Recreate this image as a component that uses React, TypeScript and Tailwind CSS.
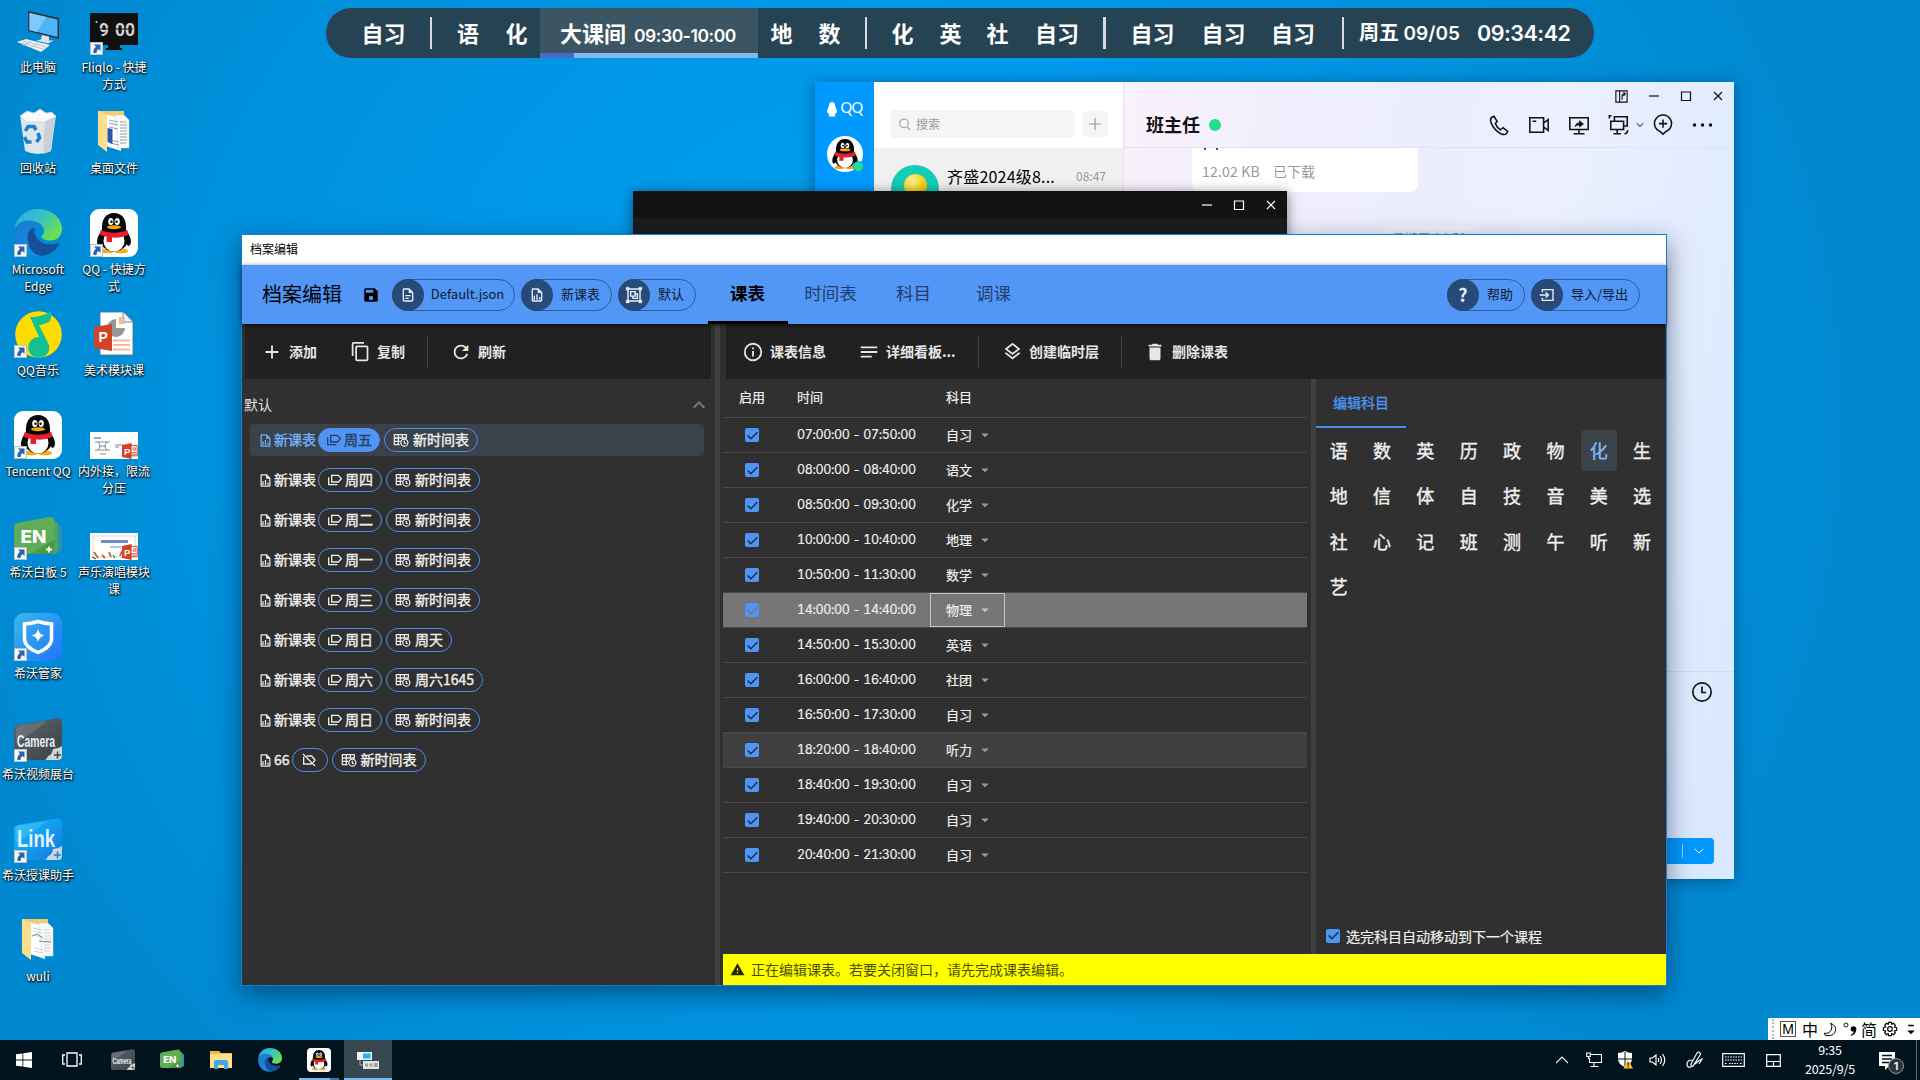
import React from "react";
import type { ReactNode } from "react";

const PATHS = {
  save: "M15,9H5V5H15M12,19A3,3 0 0,1 9,16A3,3 0 0,1 12,13A3,3 0 0,1 15,16A3,3 0 0,1 12,19M17,3H5C3.89,3 3,3.9 3,5V19A2,2 0 0,0 5,21H19A2,2 0 0,0 21,19V7L17,3Z",
  fileDoc: "M6,2A2,2 0 0,0 4,4V20A2,2 0 0,0 6,22H18A2,2 0 0,0 20,20V8L14,2H6M6,4H13V9H18V20H6V4M8,12V14H16V12H8M8,16V18H13V16H8Z",
  fileChart: "M6 2C4.9 2 4 2.9 4 4V20C4 21.1 4.9 22 6 22H18C19.1 22 20 21.1 20 20V8L14 2H6M6 4H13V9H18V20H6V4M9 13V19H7V13H9M15 15V19H17V15H15M11 11V19H13V11H11Z",
  plus: "M19,13H13V19H11V13H5V11H11V5H13V11H19V13Z",
  copy: "M19,21H8V7H19M19,5H8A2,2 0 0,0 6,7V21A2,2 0 0,0 8,23H19A2,2 0 0,0 21,21V7A2,2 0 0,0 19,5M16,1H4A2,2 0 0,0 2,3V17H4V3H16V1Z",
  refresh: "M17.65,6.35C16.2,4.9 14.21,4 12,4A8,8 0 0,0 4,12A8,8 0 0,0 12,20C15.73,20 18.84,17.45 19.73,14H17.65C16.83,16.33 14.61,18 12,18A6,6 0 0,1 6,12A6,6 0 0,1 12,6C13.66,6 15.14,6.69 16.22,7.78L13,11H20V4L17.65,6.35Z",
  info: "M11,9H13V7H11M12,20C7.59,20 4,16.41 4,12C4,7.59 7.59,4 12,4C16.41,4 20,7.59 20,12C20,16.41 16.41,20 12,20M12,2A10,10 0 0,0 2,12A10,10 0 0,0 12,22A10,10 0 0,0 22,12A10,10 0 0,0 12,2M11,17H13V11H11V17Z",
  text: "M3,6H21V8H3V6M3,11H21V13H3V11M3,16H15V18H3V16Z",
  layers: "M12,18.54L19.37,12.8L21,14.07L12,21.07L3,14.07L4.62,12.81L12,18.54M12,16L3,9L12,2L21,9L12,16M12,4.53L6.26,9L12,13.47L17.74,9L12,4.53Z",
  trash: "M19,4H15.5L14.5,3H9.5L8.5,4H5V6H19M6,19A2,2 0 0,0 8,21H16A2,2 0 0,0 18,19V7H6V19Z",
  chevronUp: "M7.41,15.41L12,10.83L16.59,15.41L18,14L12,8L6,14L7.41,15.41Z",
  menuDown: "M7,10L12,15L17,10H7Z",
  alert: "M13,14H11V10H13M13,18H11V16H13M1,21H23L12,2L1,21Z",
};

function Mdi({ d, className }: { d: string; className: string }) {
  return (
    <svg viewBox="0 0 24 24" fill="currentColor" className={`shrink-0 ${className}`}>
      <path d={d} />
    </svg>
  );
}

function Line({ children, className, w = 2, box = "0 0 24 24" }: { children: ReactNode; className: string; w?: number; box?: string }) {
  return (
    <svg viewBox={box} fill="none" stroke="currentColor" strokeWidth={w} className={`shrink-0 ${className}`}>
      {children}
    </svg>
  );
}

const Labels = ({ off = false }: { off?: boolean }) =>
  off ? (
    <Line className="size-4"><path d="M3 3l18 18M8.500 6H16l5 6-3 4M4 7v11h12M4 18V7" /></Line>
  ) : (
    <Line className="size-4"><path d="M7 5h10l4.500 5-4.500 5H7zM2.500 8v11h13" /></Line>
  );

const TableClock = () => (
  <Line className="size-4" w={1.900}>
    <path d="M10 19H2V4h18v6M2 9h18M2 14h9M8 4v15M14 4v6" />
    <circle cx="17" cy="16" r="5.300" />
    <path d="M17 13v3.500l2.500 1.200" />
  </Line>
);

const Group = () => (
  <Line className="size-[18px]" w={1.900}>
    <path d="M4 4h16v16H4z" />
    <path d="M1.500 1.500h4v4h-4zM18.500 1.500h4v4h-4zM1.500 18.500h4v4h-4zM18.500 18.500h4v4h-4z" fill="currentColor" strokeWidth="0.500" />
    <path d="M7.500 7.500h6v6h-6zM13.500 10.500h3v6h-6v-3" />
  </Line>
);

const Import = () => (
  <Line className="size-4" w={2}>
    <path d="M5 8V4h16v16H5v-4M1 12h13M10 8l4 4-4 4" />
  </Line>
);

function Penguin({ className }: { className: string }) {
  return (
    <svg viewBox="0 0 48 48" className={className}>
      <ellipse cx="17" cy="42" rx="7" ry="2.300" fill="#f8a90b" />
      <ellipse cx="31" cy="42" rx="7" ry="2.300" fill="#f8a90b" />
      <path d="M12 21C6 29 6 35 9 37c2 0 4-4 4-7zM36 21c6 8 6 14 3 16-2 0-4-4-4-7z" fill="#080808" />
      <ellipse cx="24" cy="30" rx="14" ry="12.500" fill="#080808" />
      <ellipse cx="24" cy="32" rx="10.500" ry="10.500" fill="#fff" />
      <path d="M12 22C11 10 16 4 24 4s13 6 12 18c-6 4-18 4-24 0z" fill="#080808" />
      <ellipse cx="20.800" cy="12.500" rx="2.600" ry="3.600" fill="#fff" />
      <ellipse cx="27.200" cy="12.500" rx="2.600" ry="3.600" fill="#fff" />
      <circle cx="21.500" cy="12.800" r="1.200" fill="#000" />
      <circle cx="26.500" cy="12.800" r="1.200" fill="#000" />
      <ellipse cx="24" cy="18.200" rx="7" ry="2" fill="#f8a90b" />
      <path d="M10.500 21c8 3.500 19 3.500 27 0l.5 5c-4 2-11 3-16 2.500V33h-5.500v-5.500c-3-.4-6-1.200-6.500-2z" fill="#e71f2a" />
    </svg>
  );
}

function EdgeLogo({ className, id }: { className: string; id: string }) {
  return (
    <svg viewBox="0 0 48 48" className={className}>
      <defs>
        <linearGradient id={id + "a"} x1="0" y1="0" x2="1" y2="0.600">
          <stop offset="0" stopColor="#2ba8e8" />
          <stop offset="0.500" stopColor="#35c1c9" />
          <stop offset="1" stopColor="#6be04f" />
        </linearGradient>
        <linearGradient id={id + "b"} x1="0" y1="0" x2="0.600" y2="1">
          <stop offset="0" stopColor="#1b78cf" />
          <stop offset="1" stopColor="#1290e4" />
        </linearGradient>
      </defs>
      <path d="M0.500 21C2 8 12 0 24 0c14 0 24 9.500 24 20 0 7-5 11.500-11.500 11.500-5 0-9-1.600-9-3.500 0-1.500 2.500-2.500 2.500-6 0-5-6-9-13-9C8 13 2 17 .5 21z" fill={`url(#${id}a)`} />
      <path d="M.2 22C2 14 9 11 16 11.500c7 .5 13 4 14 9-2-2-5-3-8-1.500-4 2-6.500 7-5.500 13 1 7 6 12.500 12 15C12 50-1 38 .2 22z" fill={`url(#${id}b)`} />
      <path d="M13.500 28c0-5 3-9 7.500-9.500-2 6 1.500 12 7 15 6 3 12 2 15.500.8 1.500-.5 2 .5 1 2C40 44 31 48 25 46.500 17 44 13.500 36 13.500 28z" fill="#164f98" />
    </svg>
  );
}

function EnLogo({ className }: { className: string }) {
  return (
    <svg viewBox="0 0 48 44" className={className}>
      <path d="M43 8l3 1.500q2 1 2 3V33q0 2-2 2.500l-3 .5z" fill="#2f93a0" />
      <path d="M38 4l4 1.500q2 1 2 3V35q0 2-2 2.500l-4 .8z" fill="#4aa56a" />
      <path d="M3 7L36 1q4-.5 4 3v30q0 4-4 4H4q-4 0-4-4V11q0-3 3-4z" fill="#5fad56" />
      <path d="M40 24v10q0 4-4 4H16z" fill="#4c984b" />
      <text x="6.500" y="27" fontSize="17.500" fontWeight="800" fontFamily="Inter" fill="#fff" textLength="26" lengthAdjust="spacingAndGlyphs">EN</text>
      <path d="M32 33.500h6M35 30.500v6" stroke="#fff" strokeWidth="1.800" />
    </svg>
  );
}

function CardLogo({ label, className, id, top, bottom, plus, size }: { label: string; className: string; id: string; top: string; bottom: string; plus: string; size: number }) {
  return (
    <svg viewBox="0 0 48 44" className={`overflow-visible ${className}`}>
      <defs>
        <linearGradient id={id} x1="0" y1="0" x2="1" y2="1">
          <stop offset="0" stopColor={top} />
          <stop offset="1" stopColor={bottom} />
        </linearGradient>
      </defs>
      <path d="M4 7L43 .5q5-.5 5 4V38q0 4-4 4H4q-4 0-4-4V12q0-4 4-5z" fill={`url(#${id})`} />
      <path d="M5 7.500L33 3Q20 14 2 25V12q0-4 3-4.500z" fill="#fff" opacity="0.120" />
      <path d="M34 38q4-1 5-7 5 0 9-3v10q0 4-4 4H31q2-1 3-4z" fill="#cdd5da" />
      <text x="3" y="29" fontSize={size} fontWeight="700" fontFamily="Liberation Sans" fill="#e9f1f8" textLength="38" lengthAdjust="spacingAndGlyphs">{label}</text>
      <path d="M40 37h7M43.500 33.500v7" stroke={plus} strokeWidth="1.500" />
    </svg>
  );
}

function Ppt({ className }: { className: string }) {
  return (
    <svg viewBox="0 0 20 20" className={className}>
      <path d="M9 3h10v13H9" fill="#fff" stroke="#d04423" strokeWidth="1.200" />
      <path d="M14 6h3v3h-3zM12 12h6M12 14h6" stroke="#d04423" fill="none" />
      <path d="M0 2.500L12 0v20L0 17.500z" fill="#d04423" />
      <text x="2.500" y="14.500" fontSize="12" fontWeight="700" fontFamily="Liberation Sans" fill="#fff">P</text>
    </svg>
  );
}

const FolderDocs = ({ pic = false }: { pic?: boolean }) => (
  <svg viewBox="0 0 32 44" className="h-11 w-8">
    <path d="M0 1h26v34H6z" fill="#f2cd6b" />
    <path d="M6 4l17 4v33L8 36z" fill="#fff" />
    <path d="M17 5h9l5 5v28H20z" fill="#fbfbfb" stroke="#cfd4d8" strokeWidth="0.500" />
    <path d="M11 10l9 2M11 13l9 2M11 17l9 2M12 30l9 2M12 33l9 2M22 12h6M22 15h7M22 18h7M22 21h7M22 24h7M22 27h7M22 30h7M22 33h6" stroke={pic ? "#c3cad0" : "#8a939b"} strokeWidth="0.900" />
    {pic ? <path d="M10 18l5-2 6 4M17 23l12 1" stroke="#6b9a78" fill="none" /> : <path d="M9.500 18l5 1v15l-5-2z" fill="#2d58a8" />}
    <path d="M0 1l9 4v37L0 35z" fill="#fbdf8d" />
  </svg>
);

const Shortcut = () => (
  <svg viewBox="0 0 13 13" className="absolute bottom-0 left-0 size-[13px]">
    <path d="M0 0h13v13H0z" fill="#b9bfc6" />
    <path d="M1 1h11v11H1z" fill="#f6f8fa" />
    <path d="M4 2.500h6.500V9L8.500 7Q6.500 8 6.500 11H3.500Q2.500 7.500 6 4.800z" fill="#2d62a8" />
  </svg>
);

const ThisPc = () => (
  <svg viewBox="0 0 48 48" className="size-12">
    <path d="M14 4l31 7v21L14 24z" fill="#2b3238" />
    <path d="M15.500 6l28 6.500v17.500l-28-7z" fill="#4db4f7" />
    <path d="M15.500 6l17 4-10 15-7-2z" fill="#7ccbff" />
    <path d="M28 28l7 1.500v4h5l-6 3-12-3 5-1z" fill="#dce1e4" />
    <path d="M3 35l9-3 24 6-9 7z" fill="#f0f2f4" />
    <path d="M6 35.500l23 6.500M9 34l23 6M9 39l8-5M16 41l8-5" stroke="#aeb7be" strokeWidth="0.800" />
  </svg>
);

const Bin = () => (
  <svg viewBox="0 0 48 48" className="size-12">
    <path d="M6 7h36l-5 36q-13 6-26 0z" fill="#dfe6ea" />
    <path d="M6 8l7-5 7 2 6-4 6 4 6-1 4 5-5 5H12z" fill="#f8fafb" stroke="#c3ccd2" strokeWidth="0.700" />
    <path d="M31 13l10-4-4 34-8 3z" fill="#c8d1d7" />
    <path d="M11.500 23l2.500-4.500h6l2 3.500M24 25l1.500 5-3 4M17.500 34h-4.500L10.500 29" fill="none" stroke="#1d7fd1" strokeWidth="3.600" />
  </svg>
);

const Fliqlo = () => (
  <svg viewBox="0 0 48 44" className="h-11 w-12">
    <path d="M0 4h48v32H0zM18 36h12v3h2v2H16v-2h2z" fill="#101010" />
    <text x="9" y="27" fontSize="19" fontWeight="700" fontFamily="Roboto" fill="#d3d3d3" textLength="10" lengthAdjust="spacingAndGlyphs">9</text>
    <text x="25" y="27" fontSize="19" fontWeight="700" fontFamily="Roboto" fill="#d3d3d3" textLength="20" lengthAdjust="spacingAndGlyphs">00</text>
    <path d="M6 20h37" stroke="#101010" strokeWidth="1" />
    <circle cx="6.500" cy="13" r="1" fill="#d3d3d3" />
  </svg>
);

const QQMusic = () => (
  <svg viewBox="0 0 48 48" className="size-12">
    <circle cx="24.500" cy="24.500" r="23.300" fill="#ffdc00" />
    <path d="M16 7q13 0 21-6 1 6-1 10-4 3-11 4l10 20a10.500 10.500 0 1 1-10-8z" fill="#14c192" />
  </svg>
);

const PptDoc = () => (
  <svg viewBox="0 0 40 46" className="h-[46px] w-10">
    <path d="M6 1h23l10 10v33H6z" fill="#fff" stroke="#3f6f9c" strokeWidth="0.800" />
    <path d="M29 1v10h10" fill="#f4f4f4" stroke="#3f6f9c" strokeWidth="0.800" />
    <path d="M22 8v9h9a9 9 0 1 1-9-9z" fill="#969696" />
    <path d="M25 6h6v7h-6z" fill="#f5b99f" />
    <path d="M19 29.500h17M19 34h17M19 38.500h17" stroke="#f5b99f" strokeWidth="2" />
    <path d="M0 16l18-3v27L0 37z" fill="#d04423" />
    <text x="4.500" y="31" fontSize="14" fontWeight="700" fontFamily="Liberation Sans" fill="#fff">P</text>
  </svg>
);

const Slide = ({ kind }: { kind: "circuit" | "music" }) => (
  <div className="relative h-[27px] w-12 self-end bg-white">
    {kind === "circuit" ? (
      <svg viewBox="0 0 48 27" className="h-full w-full">
        <path d="M4 6h7" stroke="#5a9ad8" strokeWidth="1.500" />
        <path d="M5 10h15M5 18h15M8 10q4 4 0 8M17 10q-4 4 0 8M9 14h7M10 22h6M25 13h8M25 15h4" stroke="#85898c" fill="none" />
      </svg>
    ) : (
      <svg viewBox="0 0 48 27" className="h-full w-full">
        <path d="M3 3h42v21H3z" fill="none" stroke="#ddd6cf" />
        <path d="M11 8.500h27" stroke="#6f8cc9" strokeWidth="3" />
        <path d="M20 14h11" stroke="#9db2dc" strokeWidth="1.500" />
        <path d="M4 19l4 6M12 22l3 3M19 19l2 5M30 23l2-5" stroke="#c66a3a" strokeWidth="2" />
        <path d="M2 24l4 2M23 22l2 3" stroke="#333" />
      </svg>
    )}
    <Ppt className="absolute right-0 bottom-0 size-4" />
  </div>
);

const Seewo = () => (
  <svg viewBox="0 0 48 48" className="size-12">
    <defs>
      <linearGradient id="seewo" x1="0" y1="0" x2="1" y2="1">
        <stop offset="0" stopColor="#38b9e6" />
        <stop offset="1" stopColor="#1f74ff" />
      </linearGradient>
    </defs>
    <rect width="48" height="48" rx="10" fill="url(#seewo)" />
    <path d="M10.500 11q7-.5 13.500-2.500Q30.500 10.500 37.500 11v15q0 8-13.500 13.500Q10.500 34 10.500 26z" fill="none" stroke="#fff" strokeWidth="3.500" />
    <path d="M24 16q1 5.500 6.500 6.500-5.500 1-6.500 6.500-1-5.500-6.500-6.500 5.500-1 6.500-6.500z" fill="#fff" />
  </svg>
);

const QQTile = () => (
  <div className="size-12 rounded-[9px] bg-white">
    <Penguin className="size-12" />
  </div>
);

function DesktopIcon({ label, shortcut, children }: { label: string; shortcut?: boolean; children?: ReactNode }) {
  return (
    <div className="flex h-[101px] w-[76px] flex-col items-center">
      <div className="relative flex h-12 w-12 shrink-0 items-center justify-center">
        {children}
        {shortcut && <Shortcut />}
      </div>
      <div className="mt-[2.500px] w-[80px] text-center text-[12px] leading-[17px] whitespace-pre text-white [text-shadow:1px_1px_2px_#000,0_1px_2px_#000]">{label}</div>
    </div>
  );
}

function Desktop() {
  return (
    <div className="absolute top-[7px] left-0 flex">
      <div className="flex flex-col">
        <DesktopIcon label="此电脑"><ThisPc /></DesktopIcon>
        <DesktopIcon label="回收站"><Bin /></DesktopIcon>
        <DesktopIcon label={"Microsoft\nEdge"} shortcut><EdgeLogo id="edge1" className="size-12" /></DesktopIcon>
        <DesktopIcon label="QQ音乐" shortcut><QQMusic /></DesktopIcon>
        <DesktopIcon label="Tencent QQ" shortcut><QQTile /></DesktopIcon>
        <DesktopIcon label="希沃白板 5" shortcut><EnLogo className="mt-1 h-11 w-12" /></DesktopIcon>
        <DesktopIcon label="希沃管家" shortcut><Seewo /></DesktopIcon>
        <DesktopIcon label="希沃视频展台" shortcut><CardLogo id="cam1" label="Camera" size={17} top="#5d666d" bottom="#3a4147" plus="#444" className="mt-1 h-11 w-12" /></DesktopIcon>
        <DesktopIcon label="希沃授课助手" shortcut><CardLogo id="link1" label="Link" size={24} top="#12c3fb" bottom="#1277e0" plus="#1b7fd6" className="mt-[2px] h-11 w-12" /></DesktopIcon>
        <DesktopIcon label="wuli"><FolderDocs pic /></DesktopIcon>
      </div>
      <div className="flex flex-col">
        <DesktopIcon label={"Fliqlo - 快捷\n方式"} shortcut><Fliqlo /></DesktopIcon>
        <DesktopIcon label="桌面文件"><FolderDocs /></DesktopIcon>
        <DesktopIcon label={"QQ - 快捷方\n式"} shortcut><QQTile /></DesktopIcon>
        <DesktopIcon label="美术模块课"><PptDoc /></DesktopIcon>
        <DesktopIcon label={"内外接，限流\n分压"}><Slide kind="circuit" /></DesktopIcon>
        <DesktopIcon label={"声乐演唱模块\n课"}><Slide kind="music" /></DesktopIcon>
      </div>
    </div>
  );
}

const Cell = ({ w, children }: { w: string; children: ReactNode }) => <span className={`pr-px pb-px text-center ${w}`}>{children}</span>;
const Bar = ({ w }: { w: string }) => (
  <span className={`flex justify-center ${w}`}>
    <span className="h-8 w-[2.500px] bg-[#d5dbe0]" />
  </span>
);

function ClassBar() {
  return (
    <div className="absolute top-2 left-[326px] flex h-[50px] w-[1268px] items-center overflow-hidden rounded-full bg-[#264353] pl-[23px] text-[22px] font-bold text-white">
      <Cell w="w-[70px]">自习</Cell>
      <Bar w="w-[24px]" />
      <Cell w="w-[51px]">语</Cell>
      <Cell w="w-[46px]">化</Cell>
      <div className="relative flex h-full w-[218px] items-center bg-[#3c5563] pl-[20px]">
        <span className="pb-px">大课间</span>
        <span className="ml-[8px] mt-[6px] font-[Inter] text-[17.500px] font-semibold tracking-[-0.450px]">09:30-10:00</span>
        <span className="absolute bottom-0 left-0 flex h-[5px] w-full bg-[#7fb9ee]">
          <span className="h-full w-[34px] bg-[#446cc6]" />
        </span>
      </div>
      <Cell w="w-[48px]">地</Cell>
      <Cell w="w-[48px]">数</Cell>
      <Bar w="w-[24px]" />
      <Cell w="w-[50px]">化</Cell>
      <Cell w="w-[46px]">英</Cell>
      <Cell w="w-[48px]">社</Cell>
      <Cell w="w-[71px]">自习</Cell>
      <Bar w="w-[23px]" />
      <Cell w="w-[74px]">自习</Cell>
      <Cell w="w-[68px]">自习</Cell>
      <Cell w="w-[71px]">自习</Cell>
      <Bar w="w-[28px]" />
      <span className="w-[120px] pl-[2px] text-[20px] whitespace-nowrap">周五 <span className="font-[Inter] text-[19px] font-semibold">09/05</span></span>
      <span className="mt-px font-[Inter] text-[21.500px] font-semibold tracking-[-0.500px]">09:34:42</span>
    </div>
  );
}

function WinButtons() {
  return (
    <>
      <Line className="size-3" w={1.200} box="0 0 12 12"><path d="M1 6h10" /></Line>
      <Line className="size-3" w={1.200} box="0 0 12 12"><path d="M1.500 2h9v8.500h-9z" /></Line>
      <Line className="size-3" w={1.200} box="0 0 12 12"><path d="M2 2l8 8M10 2l-8 8" /></Line>
    </>
  );
}

function QQWindow() {
  return (
    <div className="absolute top-[82px] left-[815px] flex h-[797px] w-[919px] overflow-hidden shadow-[0_2px_14px_rgba(0,40,80,0.5)]">
      <div className="flex w-[59px] flex-col items-center bg-[#0099ff] pt-[18px]">
        <div className="flex h-[18px] items-center gap-[2px] text-[14.500px] leading-none text-white">
          <svg viewBox="0 0 12 16" className="h-[15px] w-[12px]"><path d="M6 0q3.500 0 3.500 5Q12 9 11.500 12l-1.500-1q0 2-1 3l1 1.500H2L3 14q-1-1-1-3l-1.500 1Q0 9 2.500 5 2.500 0 6 0z" fill="#fff" /></svg>
          <span className="-mt-[2px] font-[Lato] tracking-[-0.500px]">QQ</span>
        </div>
        <div className="relative mt-[18px] size-9 rounded-full bg-white">
          <Penguin className="size-9" />
          <span className="absolute right-[-1px] bottom-0 size-[11px] rounded-full border border-[#0099ff] bg-[#25e08a]" />
        </div>
      </div>
      <div className="flex w-[250px] flex-col border-r border-[#e6e3ee] bg-[#f0f0f0]">
        <div className="flex h-[66px] gap-2 bg-white pt-[28px] pl-4">
          <div className="flex h-7 w-[184px] items-center rounded bg-[#f5f5f5] pl-[8px] text-[12px] text-[#999]">
            <Line className="mr-[5px] size-[13px]" w={1.900}><circle cx="11" cy="10" r="8" /><path d="M17 16l5 6" /></Line>
            搜索
          </div>
          <div className="mt-[1px] flex size-[26px] items-center justify-center rounded bg-[#f5f5f5] text-[#9a9a9a]">
            <Line className="size-3" w={1.200} box="0 0 12 12"><path d="M6 0v12M0 6h12" /></Line>
          </div>
        </div>
        <div className="flex pt-[17px] pl-[17px]">
          <div className="size-12 rounded-full bg-[#12cdb8] pt-[9px]">
            <div className="mx-auto size-[23px] rounded-full bg-[radial-gradient(circle_at_35%_30%,#fff3a0,#fbd81c_45%,#e0b000)]" />
          </div>
          <span className="ml-[8px] -mt-px w-[129px] text-[16px] leading-[24px] tracking-[0.200px] whitespace-nowrap text-black">齐盛2024级8...</span>
          <span className="text-[12px] leading-[22px] text-[#999]">08:47</span>
        </div>
      </div>
      <div className="flex flex-1 flex-col bg-[linear-gradient(100deg,#f9f1fc_0%,#ebedfe_40%,#ecf0ff_60%,#d8e8fe_100%)] text-[#111]">
        <div className="flex h-[66px] flex-col border-b border-[#dfe2f2]">
          <div className="flex h-7 items-center justify-end gap-5 pr-[10px]">
            <Line className="-mr-px size-[15px]" w={1.800}><path d="M3 3h18v18H3zM9 3v18M13 17V9q0-1 4-1M15 5l3 3-3 3" /></Line>
            <WinButtons />
          </div>
          <div className="flex h-[30px] items-center pr-[21px] pl-[22px]">
            <span className="pb-[2px] text-[18px] font-bold">班主任</span>
            <span className="ml-[9px] size-3 rounded-full bg-[#22e087]" />
            <div className="ml-auto flex items-center">
              <Line className="mr-[18px] size-[22px]" w={1.700}><path d="M6.500 2.500L3.500 4Q2 6 3.500 10q3.500 8 10.500 11.500 3.500 1.500 5.500.5l2-3-5-4-3 2.300Q10 15 8 10.500L10 8z" /></Line>
              <Line className="mr-[18px] size-[22px]" w={1.700}><path d="M2 4h15v16H2zM17 10l5-4v12l-5-4M5 8h4" /></Line>
              <Line className="mr-[18px] size-[22px]" w={1.700}><path d="M2 4h20v13H2zM12 17v4M6 21.500h12" /><path d="M7.500 14q1-4.500 5-4.500V7l4.500 4-4.500 3.500v-2.500q-3 0-5 2z" fill="currentColor" strokeWidth="0.500" /></Line>
              <Line className="mr-[6px] size-[22px]" w={1.700}><path d="M7 8V3h14v10h-4M3 8h14v9H3zM10 17v4M6 21.500h8M1.500 5V2H4M18 21.500q3 0 3.500-4" /></Line>
              <Line className="mr-[8px] size-[8px]" w={3}><path d="M2 7l10 9 10-9" /></Line>
              <Line className="mr-[18px] size-[22px]" w={1.700}><path d="M12 22l-3-2.800A9.300 9.300 0 1 1 15 19.200zM12 6v9M7.500 10.500h9" /></Line>
              <svg viewBox="0 0 20 4" className="h-1 w-[21px]"><circle cx="2" cy="2" r="1.700" /><circle cx="10" cy="2" r="1.700" /><circle cx="18" cy="2" r="1.700" /></svg>
            </div>
          </div>
        </div>
        <div className="flex h-[524px] flex-col border-b border-[#cfdaf0]">
          <div className="relative ml-[68px] flex h-11 w-[226px] items-center gap-[13px] rounded-b-lg bg-white pt-[2px] pl-[10px] text-[14px] text-[#999]">
            <span className="absolute top-0 left-[12px] h-[2px] w-[2px] bg-[#555]" />
            <span className="absolute top-0 left-[24px] h-[2px] w-[2px] bg-[#555]" />
            <span className="tracking-[0.200px]">12.02 KB</span>
            <span>已下载</span>
          </div>
          <span className="mt-[34px] ml-[256px] h-6 w-[98px] rounded-full bg-white/30 text-center text-[13px] leading-[24px] text-[#999]">星期三 14:50</span>
        </div>
        <div className="flex flex-1 flex-col items-end pr-5">
          <Line className="mt-[9px] mr-[1px] size-[22px]" w={1.800}><circle cx="12" cy="12" r="10" /><path d="M12 6v6.500h4.500" /></Line>
          <div className="mt-[135px] flex h-[26px] w-[120px] items-center justify-end rounded bg-[#0099ff] pr-[10px] text-white">
            <span className="mr-[11px] h-[14px] w-px bg-white/60" />
            <Line className="size-[10px]" w={2.400}><path d="M2 7l10 10 10-10" /></Line>
          </div>
        </div>
      </div>
    </div>
  );
}

function DarkWindow() {
  return (
    <div className="absolute top-[191px] left-[633px] h-[200px] w-[654px] bg-[#1c1c1c] shadow-[0_2px_12px_rgba(0,0,0,0.5)]">
      <div className="flex h-[27px] items-center justify-end gap-5 bg-[#131313] pr-[10px] text-white">
        <WinButtons />
      </div>
    </div>
  );
}

function Chip({ icon, label, w }: { icon: ReactNode; label: string; w: string }) {
  return (
    <div className={`flex h-8 items-center rounded-full border border-[#315d9b] text-[13px] text-[#0d1a2b] ${w}`}>
      <span className="-ml-px flex size-8 shrink-0 items-center justify-center rounded-full bg-[#294a78] text-[#e8eefa]">{icon}</span>
      <span className="flex-1 pr-[3px] pb-[2px] text-center whitespace-nowrap">{label}</span>
    </div>
  );
}

const TABS = [
  { label: "时间表", w: "w-[86px]" },
  { label: "科目", w: "w-[80px]" },
  { label: "调课", w: "w-20" },
];

function Header() {
  return (
    <div className="relative z-10 flex h-[59px] shrink-0 items-center bg-[#5297f5] pl-5 text-black shadow-[0_1px_4px_rgba(0,0,0,0.7)]">
      <span className="w-[100px] pb-[2px] text-[20px] whitespace-nowrap">档案编辑</span>
      <Mdi d={PATHS.save} className="size-[18px]" />
      <div className="ml-[12px] flex gap-[6px]">
        <Chip w="w-[123px]" icon={<Mdi d={PATHS.fileDoc} className="size-4" />} label="Default.json" />
        <Chip w="w-[91px]" icon={<Mdi d={PATHS.fileChart} className="size-4" />} label="新课表" />
        <Chip w="w-[78px]" icon={<Group />} label="默认" />
      </div>
      <div className="ml-[12px] flex h-full text-[17.500px] text-[#1f3f6c]">
        <span className="flex w-20 items-center justify-center border-b-[3px] border-black pr-px font-bold text-black">课表</span>
        {TABS.map((t) => (
          <span key={t.label} className={`flex items-center justify-center pr-px pb-[3px] ${t.w}`}>{t.label}</span>
        ))}
      </div>
      <div className="ml-auto flex gap-[6px] pr-[26px]">
        <Chip w="w-[78px]" icon={<span className="text-[18px] font-bold">?</span>} label="帮助" />
        <Chip w="w-[109px]" icon={<Import />} label="导入/导出" />
      </div>
    </div>
  );
}

function Tool({ d, label, w, size = "size-5" }: { d: string; label: string; w: string; size?: string }) {
  return (
    <div className={`flex items-center text-[14px] font-bold whitespace-nowrap text-[#e6e6e6] ${w}`}>
      <span className="mr-[7px] flex w-5 justify-center"><Mdi d={d} className={size} /></span>
      <span className="pb-px">{label}</span>
    </div>
  );
}

const Sep = () => <span className="h-8 w-px bg-[#404040]" />;

const PLANS = [
  { name: "新课表", day: "周五", table: "新时间表", on: true },
  { name: "新课表", day: "周四", table: "新时间表" },
  { name: "新课表", day: "周二", table: "新时间表" },
  { name: "新课表", day: "周一", table: "新时间表" },
  { name: "新课表", day: "周三", table: "新时间表" },
  { name: "新课表", day: "周日", table: "周天" },
  { name: "新课表", day: "周六", table: "周六1645" },
  { name: "新课表", day: "周日", table: "新时间表" },
  { name: "66", day: "", table: "新时间表" },
];

function LeftPane() {
  return (
    <div className="flex w-[473px] shrink-0 flex-col">
      <div className="mr-1 ml-[3px] flex h-[55px] items-center bg-[#212121] pl-[17px]">
        <Tool d={PATHS.plus} label="添加" w="w-[88px]" size="size-[22px]" />
        <Tool d={PATHS.copy} label="复制" w="w-[77px]" size="size-[21px]" />
        <Sep />
        <Tool d={PATHS.refresh} label="刷新" w="ml-[23px]" size="size-[22px]" />
      </div>
      <div className="mt-[14px] flex h-6 items-center justify-between pr-[4px] pl-[2px] text-[14px] text-[#e0e0e0]">
        <span className="pb-px">默认</span>
        <Mdi d={PATHS.chevronUp} className="size-6 text-[#787878]" />
      </div>
      <div className="mt-[7px] flex flex-col gap-2 pr-[11px] pl-2">
        {PLANS.map((p, i) => (
          <div key={i} className={`flex h-8 items-center rounded pl-[8px] text-[14px] [-webkit-text-stroke:0.4px] ${p.on ? "bg-[#3c4249] text-[#6fb0f6]" : "text-[#ececec]"}`}>
            <Mdi d={PATHS.fileChart} className="mr-[1px] size-[15px]" />
            <span className="pb-[2px]">{p.name}</span>
            <span className={`ml-[2px] flex h-6 items-center gap-[2px] rounded-full border border-[#4c8fee] ${p.on ? "bg-[#4f95f5] px-[7px] text-[#26405f]" : "px-[8px]"}`}>
              <Labels off={!p.day} />
              <span className="pb-[2px]">{p.day}</span>
            </span>
            <span className="ml-1 flex h-6 items-center gap-[4px] rounded-full border border-[#4c8fee] px-[8px] text-[#ececec]">
              <TableClock />
              <span className="pb-[2px]">{p.table}</span>
            </span>
          </div>
        ))}
      </div>
    </div>
  );
}

const Check = ({ className = "text-[#1d2c42]" }: { className?: string }) => (
  <span className={`flex size-[14px] shrink-0 items-center justify-center rounded-[2px] bg-[#4f95f5] ${className}`}>
    <Line className="size-[13px]" w={2.800}><path d="M3 12l6 6L21 6" /></Line>
  </span>
);

const ROWS: [string, string, string?][] = [
  ["07:00:00 - 07:50:00", "自习"],
  ["08:00:00 - 08:40:00", "语文"],
  ["08:50:00 - 09:30:00", "化学"],
  ["10:00:00 - 10:40:00", "地理"],
  ["10:50:00 - 11:30:00", "数学"],
  ["14:00:00 - 14:40:00", "物理", "sel"],
  ["14:50:00 - 15:30:00", "英语"],
  ["16:00:00 - 16:40:00", "社团"],
  ["16:50:00 - 17:30:00", "自习"],
  ["18:20:00 - 18:40:00", "听力", "hover"],
  ["18:40:00 - 19:30:00", "自习"],
  ["19:40:00 - 20:30:00", "自习"],
  ["20:40:00 - 21:30:00", "自习"],
];

function Schedule() {
  return (
    <div className="flex w-[584px] flex-col text-[13px] text-[#efefef] [-webkit-text-stroke:0.2px]">
      <div className="flex h-[39px] items-center border-b border-[#4a4a4a] pb-[2px] pl-[16px] text-[13px]">
        <span className="w-[58px]">启用</span>
        <span className="w-[149px]">时间</span>
        <span>科目</span>
      </div>
      {ROWS.map(([time, subject, state]) => (
        <div key={time} className={`flex h-[35px] items-center border-b border-[#4a4a4a] pl-[22px] ${state === "sel" ? "bg-[#767676]" : state === "hover" ? "bg-[#404040]" : ""}`}>
          <Check className={state === "sel" ? "text-[#767676]" : "text-[#1d2c42]"} />
          <span className="ml-[38px] w-[133px] font-[Inter] text-[12.500px] tracking-[-0.350px] whitespace-nowrap tabular-nums">{time}</span>
          <span className={`flex h-[34px] w-[75px] items-center border pl-[15px] ${state === "sel" ? "border-[#c6c6c6]" : "border-transparent"}`}>
            <span className="pb-px">{subject}</span>
            <Mdi d={PATHS.menuDown} className={`ml-[4px] size-[18px] ${state === "sel" ? "text-[#c4c4c4]" : "text-[#9a9a9a]"}`} />
          </span>
        </div>
      ))}
    </div>
  );
}

const SUBJECTS = "语数英历政物化生地信体自技音美选社心记班测午听新艺".split("");

function Subjects() {
  return (
    <div className="flex flex-1 flex-col">
      <div className="flex h-[49px] w-[90px] items-center justify-center border-b-2 border-[#4a8df0] text-[14px] text-[#4f95f5] [-webkit-text-stroke:0.3px]">编辑科目</div>
      <div className="mt-[2px] ml-px grid grid-cols-[repeat(8,43.350px)] auto-rows-[45.600px]">
        {SUBJECTS.map((s) => (
          <span key={s} className={`mx-auto flex h-[41px] w-9 items-center justify-center rounded pb-px text-[18px] [-webkit-text-stroke:0.4px] ${s === "化" ? "bg-[#3c4249] text-[#7dbcfb]" : "text-[#efefef]"}`}>{s}</span>
        ))}
      </div>
      <div className="mt-auto mb-[7px] flex h-5 items-center gap-[6px] pl-[10px] text-[14px] text-[#efefef] [-webkit-text-stroke:0.2px]">
        <span className="-mt-[3px]"><Check /></span>
        <span className="pb-px">选完科目自动移动到下一个课程</span>
      </div>
    </div>
  );
}

function ProfileEditor() {
  return (
    <div className="absolute top-[234px] left-[241px] flex h-[752px] w-[1426px] flex-col border border-[#1a7fd4] bg-[#303030] shadow-[0_8px_24px_rgba(0,20,50,0.5)]">
      <div className="h-[30px] shrink-0 bg-white pl-2 text-[12px] leading-[28px] text-black">档案编辑</div>
      <Header />
      <div className="flex min-h-0 flex-1">
        <LeftPane />
        <div className="w-[5px] shrink-0 bg-[#404040]" />
        <div className="ml-[3px] flex flex-1 flex-col">
          <div className="mr-px ml-[3px] flex h-[55px] shrink-0 items-center bg-[#212121] pl-[17px]">
            <Tool d={PATHS.info} label="课表信息" w="w-[116px]" size="size-[22px]" />
            <Tool d={PATHS.text} label="详细看板..." w="w-[119px]" size="size-[22px]" />
            <Sep />
            <Tool d={PATHS.layers} label="创建临时层" w="ml-[23px] w-[119px]" size="size-[21px]" />
            <Sep />
            <Tool d={PATHS.trash} label="删除课表" w="ml-[23px]" size="size-[22px]" />
          </div>
          <div className="flex min-h-0 flex-1">
            <Schedule />
            <div className="ml-1 w-[5px] shrink-0 bg-[#404040]" />
            <Subjects />
          </div>
          <div className="flex h-[31px] shrink-0 items-center bg-[#ffff00] pl-[7px] text-[14px] text-[#4d4d00]">
            <Mdi d={PATHS.alert} className="mr-[6px] size-[15px] text-[#262600]" />
            <span className="pb-px">正在编辑课表。若要关闭窗口，请先完成课表编辑。</span>
          </div>
        </div>
      </div>
    </div>
  );
}

function ImeBar() {
  return (
    <div className="absolute top-[1018px] left-[1768px] flex h-[22px] w-[152px] items-center bg-white text-[16px] leading-[22px] text-black">
      <span className="ml-[4px] h-5 w-0 border-l-2 border-dotted border-[#bbb]" />
      <span className="ml-[6px] flex h-4 w-4 items-center justify-center border border-[#555] font-['Liberation_Sans'] text-[14px] leading-none">M</span>
      <span className="ml-[6px] pb-px">中</span>
      <Line className="ml-[5px] size-[15px]" w={1.600}><path d="M12 2q10 4 8 12t-12 8Q2 22 2 18q8 1 11-5t-1-11z" /></Line>
      <span className="ml-[5px] flex w-[14px] items-center font-bold">
        <Line className="-mt-2 size-[6px]" w={3.500}><circle cx="12" cy="12" r="8" /></Line>
        <svg viewBox="0 0 8 12" className="mt-1 h-3 w-2"><circle cx="4.500" cy="4" r="2.800" /><path d="M7.300 4q0 5-5 7l-.5-1Q5 8.500 5 6z" /></svg>
      </span>
      <span className="ml-[4px] pb-px">简</span>
      <Line className="ml-[5px] size-4" w={1.700}>
        <circle cx="12" cy="12" r="3.500" />
        <path d="M10 2h4l.7 3 2.800-1.500L20 6.500 18.500 9l3.500 1v4l-3.500 1 1.500 2.500-2.500 3-2.800-1.500L14 22h-4l-.7-3-2.800 1.500-2.500-3L5.500 15 2 14v-4l3.500-1L4 6.500l2.500-3L9.300 5z" />
      </Line>
      <svg viewBox="0 0 8 14" className="ml-[9px] h-[13px] w-2"><path d="M1 2h6v1.500H1zM0 8h8l-4 4z" /></svg>
    </div>
  );
}

function Task({ children, active, left = "" }: { children: ReactNode; active?: boolean; left?: string }) {
  return <span className={`relative flex h-10 w-12 items-center justify-center ${active ? "bg-[#36474f]" : ""} ${left}`}>{children}</span>;
}

function Taskbar() {
  return (
    <div className="absolute top-[1040px] left-0 flex h-10 w-full items-center bg-[#01131d] text-white">
      <Task>
        <svg viewBox="0 0 16 16" className="size-4" fill="#fff"><path d="M0 2.300L6.500 1.400v6.200H0zM7.300 1.300L16 0v7.600H7.300zM0 8.400h6.500v6.200L0 13.700zM7.300 8.400H16V16l-8.700-1.300z" /></svg>
      </Task>
      <Task><Line className="h-4 w-5" w={1.300} box="0 0 20 16"><path d="M5 1h10v13H5zM3 3H.7v9H3M17 3h2.300v9H17" /></Line></Task>
      <Task left="ml-[3px]"><CardLogo id="cam2" label="Camera" size={17} top="#5d666d" bottom="#3a4147" plus="#444" className="h-[22px] w-6" /></Task>
      <Task left="ml-px"><EnLogo className="h-[22px] w-6" /></Task>
      <Task left="ml-px">
        <svg viewBox="0 0 22 20" className="h-5 w-[22px]">
          <path d="M0 1h9l2 2h11v15H0z" fill="#f5b93c" />
          <path d="M0 4h22v14H0z" fill="#ffe08a" />
          <path d="M4 19v-7q0-2 2-2h10q2 0 2 2v7h-4v-4H8v4z" fill="#3fa9e8" />
        </svg>
      </Task>
      <Task left="ml-px"><EdgeLogo id="edge2" className="size-6" /></Task>
      <Task left="ml-px">
        <span className="size-6 rounded bg-white"><Penguin className="size-6" /></span>
        <span className="absolute bottom-0 left-1 flex h-[2px] w-10 bg-[#4d7392]"><span className="w-[31px] bg-[#76b9ed]" /></span>
      </Task>
      <Task left="ml-px" active>
        <svg viewBox="0 0 22 17" className="h-[17px] w-[22px]">
          <path d="M0 0h15v8H0z" fill="#eef1f3" />
          <path d="M6 1.500h7.500v5H6z" fill="#19b6f2" />
          <path d="M6 9h16v8H6z" fill="#e2e5e7" />
          <path d="M8 11.500h3v3H8zM12.500 11.500h3v3h-3zM17 11h3.500v4H17z" fill="#9aa0a5" />
          <path d="M3 8v5h3" stroke="#aab" fill="none" />
        </svg>
        <span className="absolute bottom-0 left-0 h-[2px] w-12 bg-[#76b9ed]" />
      </Task>
      <div className="ml-auto flex h-10 items-center">
        <Line className="mr-[18px] size-3" w={1.200} box="0 0 12 12"><path d="M0 9l6-6 6 6" /></Line>
        <Line className="mr-[15px] size-4" w={1.100} box="0 0 16 16"><path d="M5 2.500h10.500v8H3.500V6M8 10.500v3.500M4.500 14.500h8M.7 1h3.600v3.500H.7zM2.500 4.500V7" /></Line>
        <svg viewBox="0 0 16 18" className="mr-[16px] h-[18px] w-4">
          <path d="M8 0q3 2 7 2v6q0 5-7 8-7-3-7-8V2q4 0 7-2z" fill="#fff" />
          <path d="M8 1v14M1 8h14" stroke="#01131d" />
          <path d="M11 8.500l5 9H6.500z" fill="#fbbf24" />
          <path d="M11.200 11.500v3M11.200 15.300v1" stroke="#222" strokeWidth="1.200" />
        </svg>
        <Line className="mr-[20px] h-4 w-[17px]" w={1.200} box="0 0 17 16"><path d="M1 6h2.500L7 3v10l-3.500-3H1zM9 6q1.500 2 0 4M11 4q3 4 0 8M13.500 2q4.500 6 0 12" /></Line>
        <Line className="mr-[19px] h-[18px] w-[17px]" w={1.200} box="0 0 17 18"><path d="M5 13L11 2q2-2 3 0 1 1-.5 3L7 15q-2 1.500-2-2zM7 9q-6 0-6 4t4 3M9 13q4-4 7-5l-3 5" /></Line>
        <Line className="mr-[21px] h-[14px] w-[23px]" w={1.200} box="0 0 23 14"><path d="M.7.700h21.600v12.600H.7z" /><path d="M3 4h17M3 7h17M3 10.500h2M7 10.500h9M18 10.500h2" strokeDasharray="1.600 1" /></Line>
        <Line className="mr-[19px] h-[13px] w-[15px]" w={1.200} box="0 0 15 13"><path d="M.7.700h13.600v11.600H.7zM.7 7.500h13.600M7.500 7.500v5" /></Line>
        <span className="flex w-[60px] flex-col items-center pb-[2px] text-[12.500px] leading-[19px] tracking-[-0.200px] whitespace-nowrap">
          <span>9:35</span>
          <span>2025/9/5</span>
        </span>
        <span className="relative ml-[19px] mr-[13px] size-6">
          <svg viewBox="0 0 24 24" className="mt-[3px] -ml-[2px] size-6"><path d="M2 1h16v14h-6l-4 4v-4H2z" fill="#fff" /><path d="M5 4.500h10M5 8h10M5 11.500h7" stroke="#01131d" strokeWidth="1.300" /></svg>
          <span className="absolute top-[10px] left-[9px] flex size-4 items-center justify-center rounded-full border border-[#8d969c] bg-[#27343c] font-[Inter] text-[11px] font-semibold">1</span>
        </span>
        <span className="mr-[3px] h-10 w-px bg-[#5d676d]" />
      </div>
    </div>
  );
}

export default function App() {
  return (
    <div className="relative h-[1080px] w-[1920px] overflow-hidden bg-[#0087cf] bg-[radial-gradient(ellipse_950px_900px_at_900px_420px,#00a2f2_0%,#0098e9_45%,#008fda_80%,#0089d1_100%)] font-['Noto_Sans_CJK_SC',sans-serif]">
      <Desktop />
      <QQWindow />
      <DarkWindow />
      <ProfileEditor />
      <ClassBar />
      <ImeBar />
      <Taskbar />
    </div>
  );
}
